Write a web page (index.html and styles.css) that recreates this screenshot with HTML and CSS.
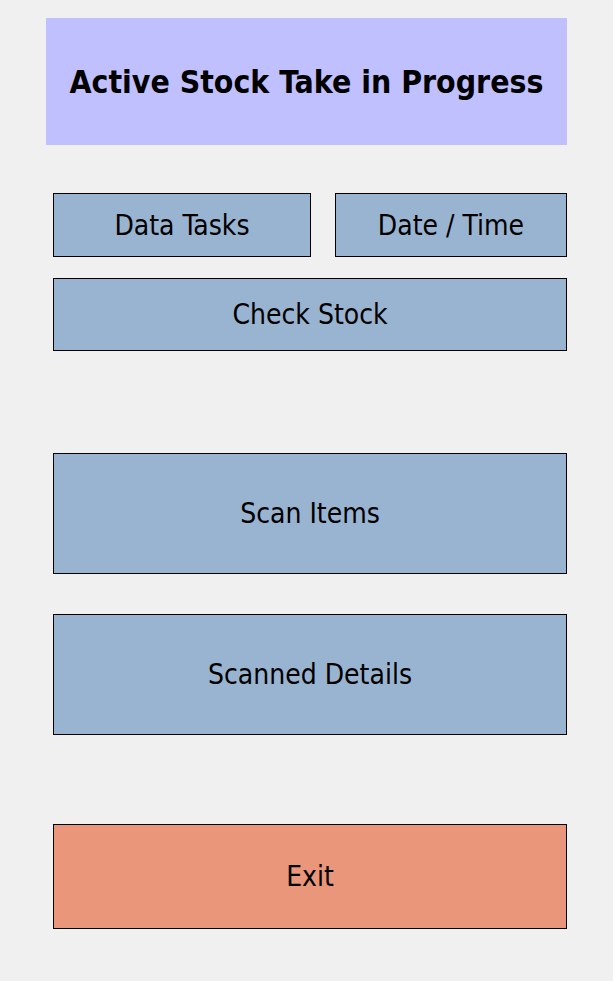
FILE: index.html
```html
<!DOCTYPE html>
<html lang="en">
<head>
  <meta charset="UTF-8">
  <meta name="viewport" content="width=device-width, initial-scale=1.0">
  <title>Stock Take</title>
  <link rel="stylesheet" href="styles.css">
</head>
<body>
  <div class="screen">
    <!-- Header -->
    <div class="header">
      <div class="header-title">Active Stock Take in Progress</div>
    </div>

    <!-- Menu -->
    <div class="menu">
      <div class="menu-row">
        <button class="menu-button">Data Tasks</button>
        <button class="menu-button">Date / Time</button>
      </div>
      <button class="menu-button check">Check Stock</button>
      <button class="menu-button big scan">Scan Items</button>
      <button class="menu-button big details">Scanned Details</button>
      <button class="menu-button exit">Exit</button>
    </div>
  </div>
</body>
</html>
```

FILE: styles.css
```css
/* Global Styles */
body {
  margin: 0;
  background: #f0f0f0;
  font-family: "DejaVu Sans Condensed", "DejaVu Sans", sans-serif;
  color: #000;
}

.screen {
  padding: 18px 46px 0 46px;
}

/* Header */
.header {
  width: 521px;
  height: 127px;
  background: #c0c0ff;
  display: flex;
  justify-content: center;
  align-items: center;
}

.header-title {
  font-size: 31.7px;
  font-weight: bold;
}

/* Menu */
.menu {
  margin: 48px 0 0 7px;
  width: 514px;
  display: flex;
  flex-direction: column;
}

.menu-row {
  display: grid;
  grid-template-columns: 258px 232px;
  gap: 24px;
  height: 64px;
}

.menu-button {
  box-sizing: border-box;
  width: 100%;
  margin: 0;
  padding: 0;
  border: 1px solid #000;
  background: #99b4d1;
  font-family: inherit;
  font-size: 28px;
  color: #000;
  cursor: pointer;
}

.menu-button.check {
  margin-top: 21px;
  height: 73px;
}

.menu-button.big {
  height: 121px;
}

.menu-button.scan {
  margin-top: 102px;
}

.menu-button.details {
  margin-top: 40px;
}

.menu-button.exit {
  margin-top: 89px;
  height: 105px;
  background: #e9967a;
}
```
